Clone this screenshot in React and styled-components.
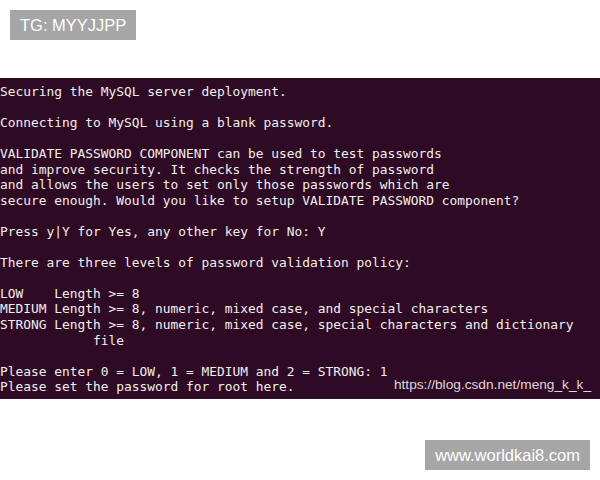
import React from 'react';
import styled, { createGlobalStyle } from 'styled-components';

const GlobalStyle = createGlobalStyle`
  html, body {
    margin: 0;
    padding: 0;
    background: #ffffff;
  }
`;

const Page = styled.div`
  width: 600px;
  height: 480px;
  display: flex;
  flex-direction: column;
  padding-top: 10px;
  box-sizing: border-box;
  overflow: hidden;
`;

const Badge = styled.div`
  align-self: ${(props) => (props.right ? 'flex-end' : 'flex-start')};
  margin: ${(props) => (props.right ? '0 10px 0 0' : '0 0 0 10px')};
  height: 30px;
  padding: 0 10px;
  display: flex;
  align-items: center;
  background: #a6a6a6;
  color: #ffffff;
  font-family: "Liberation Sans", Arial, sans-serif;
  font-size: 16.5px;
  white-space: nowrap;
`;

const Terminal = styled.div`
  position: relative;
  margin: 38px 0 41px;
  height: 321px;
  padding: 6px 0 0 0;
  box-sizing: border-box;
  background: #2f0a24;
`;

const Screen = styled.pre`
  margin: 0;
  color: #efefec;
  font-family: "DejaVu Sans Mono", "Liberation Mono", monospace;
  font-size: 12.88px;
  line-height: 15.53px;
  white-space: pre;
`;

const Watermark = styled.span`
  position: absolute;
  right: 9px;
  bottom: 7px;
  color: rgba(255, 255, 255, 0.85);
  font-family: "Liberation Sans", Arial, sans-serif;
  font-size: 13.7px;
  white-space: nowrap;
`;

const lines = [
  'Securing the MySQL server deployment.',
  '',
  'Connecting to MySQL using a blank password.',
  '',
  'VALIDATE PASSWORD COMPONENT can be used to test passwords',
  'and improve security. It checks the strength of password',
  'and allows the users to set only those passwords which are',
  'secure enough. Would you like to setup VALIDATE PASSWORD component?',
  '',
  'Press y|Y for Yes, any other key for No: Y',
  '',
  'There are three levels of password validation policy:',
  '',
  'LOW    Length >= 8',
  'MEDIUM Length >= 8, numeric, mixed case, and special characters',
  'STRONG Length >= 8, numeric, mixed case, special characters and dictionary',
  '            file',
  '',
  'Please enter 0 = LOW, 1 = MEDIUM and 2 = STRONG: 1',
  'Please set the password for root here.',
];

function App() {
  return (
    <>
      <GlobalStyle />
      <Page>
        <Badge>TG: MYYJJPP</Badge>
        <Terminal>
          <Screen>{lines.join('\n')}</Screen>
          <Watermark>https://blog.csdn.net/meng_k_k_</Watermark>
        </Terminal>
        <Badge right>www.worldkai8.com</Badge>
      </Page>
    </>
  );
}

export default App;
